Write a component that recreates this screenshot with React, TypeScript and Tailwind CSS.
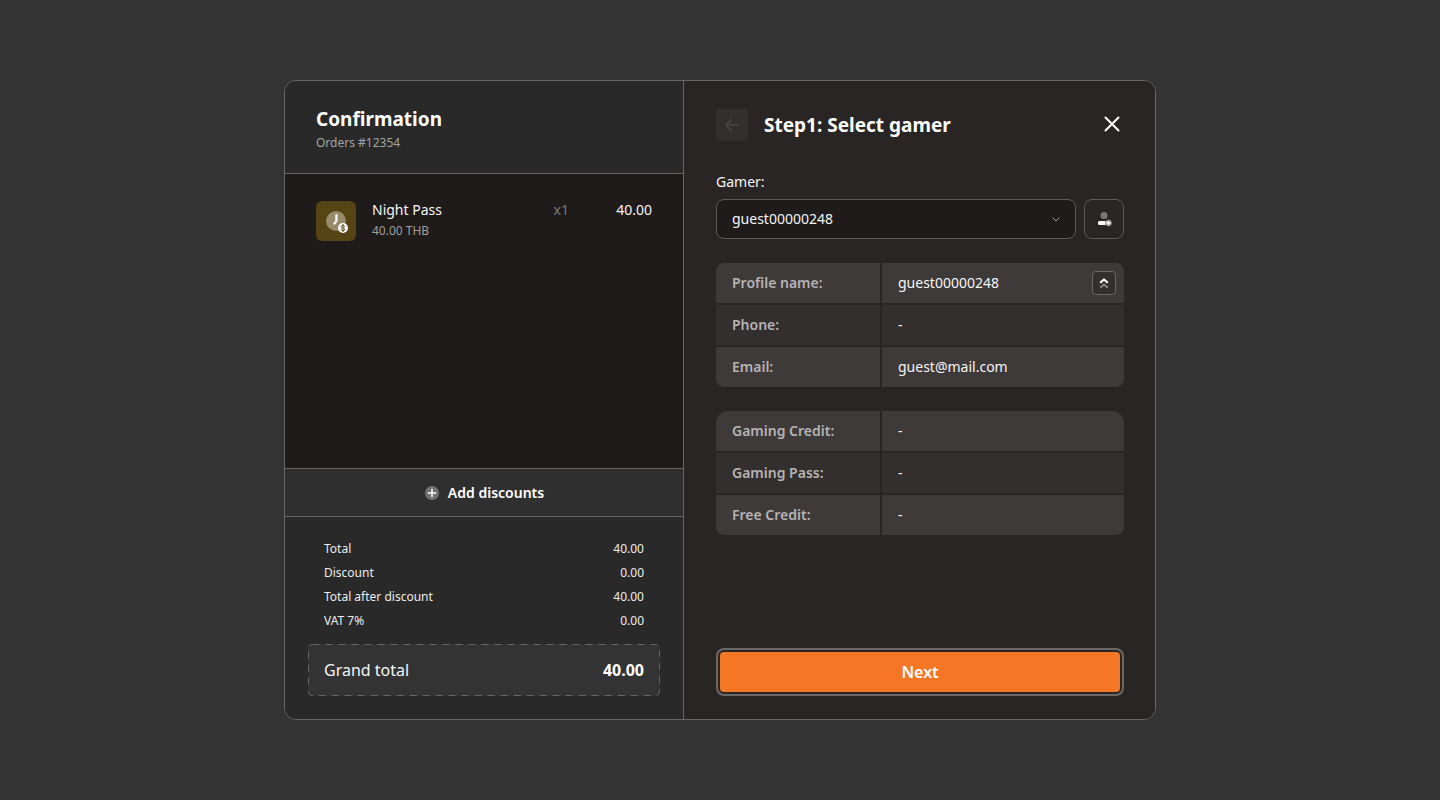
import React from "react";

interface OrderItem {
  name: string;
  price: string;
  quantity: number;
  amount: string;
}

interface Row {
  label: string;
  value: string;
}

interface InfoTableProps {
  rows: Row[];
  className?: string;
  action?: React.ReactNode;
}

const items: OrderItem[] = [
  { name: "Night Pass", price: "40.00 THB", quantity: 1, amount: "40.00" },
];

const totals: Row[] = [
  { label: "Total", value: "40.00" },
  { label: "Discount", value: "0.00" },
  { label: "Total after discount", value: "40.00" },
  { label: "VAT 7%", value: "0.00" },
];

const profile: Row[] = [
  { label: "Profile name:", value: "guest00000248" },
  { label: "Phone:", value: "-" },
  { label: "Email:", value: "guest@mail.com" },
];

const credits: Row[] = [
  { label: "Gaming Credit:", value: "-" },
  { label: "Gaming Pass:", value: "-" },
  { label: "Free Credit:", value: "-" },
];

const PassIcon = () => (
  <svg width="40" height="40" viewBox="0 0 40 40" fill="none" aria-hidden="true">
    <circle cx="20" cy="20" r="10" fill="#988b6c" />
    <path d="M20.4 14.2v5.4q0 1.2-2.2 3" stroke="#fff" strokeWidth="2.2" strokeLinecap="round" />
    <circle cx="27" cy="27" r="5" fill="#fff" />
    <path
      d="M28.8 25.4c-.3-.7-1-1-1.8-1-1 0-1.8.5-1.8 1.3 0 1.9 3.7.8 3.7 2.7 0 .8-.8 1.3-1.9 1.3-.9 0-1.6-.4-1.9-1.1M27 23.5v7"
      stroke="#574414"
      strokeLinecap="round"
    />
  </svg>
);

const AddUserIcon = () => (
  <svg width="16" height="16" viewBox="0 0 16 16" fill="none" aria-hidden="true">
    <circle cx="8" cy="4.5" r="3.5" fill="#797676" />
    <path d="M3.5 10h7v4h-7A1.5 1.5 0 0 1 2 12.500v-1A1.500 1.500 0 0 1 3.500 10Z" fill="#fff" />
    <circle cx="12.5" cy="12" r="3.300" fill="#8a8787" />
    <path d="M12.5 9.700v4.600M10.200 12h4.600" stroke="#fff" strokeWidth="1.600" />
  </svg>
);

const InfoTable = ({ rows, className = "", action }: InfoTableProps) => (
  <div className={`overflow-hidden ${className}`}>
    <table className="w-full table-fixed border-separate border-spacing-0 text-sm">
      <tbody className="[&>tr:not(:last-child)>*]:border-b-2">
        {rows.map((row, index) => (
          <tr key={row.label} className={index % 2 ? "bg-[#332f2e]" : "bg-[#3e3a39]"}>
            <th
              scope="row"
              className="w-[166px] border-r-2 border-[#292524] px-4 py-2 text-left leading-6 font-semibold text-[#b5b3b3]"
            >
              {row.label}
            </th>
            <td className="border-[#292524] py-2 pr-2 pl-4 leading-6 text-[#f5f5f5]">
              <div className="flex items-center justify-between">
                {row.value}
                {index === 0 && action}
              </div>
            </td>
          </tr>
        ))}
      </tbody>
    </table>
  </div>
);

const OrderSummary = () => (
  <section className="flex w-[399px] shrink-0 flex-col border-r border-[#666] bg-[#292929]">
    <header className="border-b border-[#666] px-[31px] pt-6 pb-5">
      <h1 className="text-[19px] leading-7 font-bold">Confirmation</h1>
      <p className="text-xs leading-5 text-[#a3a3a3]">Orders #12354</p>
    </header>

    <ul className="flex-1 bg-[#1f1b1a] px-[31px] py-[27px]">
      {items.map((item) => (
        <li key={item.name} className="flex">
          <div className="h-10 w-10 shrink-0 rounded-md bg-[#574414]">
            <PassIcon />
          </div>
          <div className="ml-4 flex-1">
            <p className="text-sm leading-[18px] text-[#f5f5f5]">{item.name}</p>
            <p className="text-xs leading-6 text-[#a09e9e]">{item.price}</p>
          </div>
          <span className="text-sm leading-[18px] text-[#7a7777]">x{item.quantity}</span>
          <span className="w-[83px] text-right text-sm leading-[18px] text-[#f5f5f5]">{item.amount}</span>
        </li>
      ))}
    </ul>

    <button
      type="button"
      className="flex h-[49px] items-center justify-center gap-2 border-y border-[#666] bg-[#2f2f2f] text-sm font-semibold"
    >
      <svg width="16" height="16" viewBox="0 0 16 16" fill="none" aria-hidden="true">
        <circle cx="8" cy="8" r="7" fill="#737373" />
        <path d="M8 4.5v7M4.5 8h7" stroke="#fff" strokeWidth="1.5" strokeLinecap="round" />
      </svg>
      Add discounts
    </button>

    <div className="px-[23px] pt-5 pb-[23px]">
      <dl className="px-4 text-xs leading-6 text-[#ececec]">
        {totals.map((row) => (
          <div key={row.label} className="flex justify-between">
            <dt>{row.label}</dt>
            <dd>{row.value}</dd>
          </div>
        ))}
      </dl>
      <div className="relative mt-[11px] flex h-13 items-center justify-between rounded bg-[#333] px-4 text-base">
        <svg className="pointer-events-none absolute inset-0 h-full w-full overflow-visible" aria-hidden="true">
          <rect
            x="0.5"
            y="0.5"
            rx="4"
            className="h-[calc(100%-1px)] w-[calc(100%-1px)]"
            fill="none"
            stroke="#666"
            strokeDasharray="7 6"
          />
        </svg>
        <span className="text-[#f5f5f5]">Grand total</span>
        <strong className="font-bold">40.00</strong>
      </div>
    </div>
  </section>
);

const SelectGamer = () => (
  <section className="flex min-w-0 flex-1 flex-col bg-[#292524] pt-7 pr-[31px] pb-[23px] pl-8">
    <header className="flex items-center">
      <button
        type="button"
        disabled
        aria-label="Back"
        className="flex h-8 w-8 items-center justify-center rounded bg-[#332f2e]"
      >
        <svg width="16" height="16" viewBox="0 0 16 16" fill="none" stroke="#4a4645" strokeWidth="1.5" aria-hidden="true">
          <path d="M14 8H2M7.5 2.5 2 8l5.5 5.5" strokeLinecap="round" strokeLinejoin="round" />
        </svg>
      </button>
      <h2 className="ml-4 flex-1 text-[19px] leading-8 font-bold">Step1: Select gamer</h2>
      <button type="button" aria-label="Close" className="flex h-8 w-6 items-center justify-center pb-0.5">
        <svg width="16" height="16" viewBox="0 0 16 16" stroke="#fff" strokeWidth="2" aria-hidden="true">
          <path d="m1.500 1.500 13 13M14.500 1.500l-13 13" strokeLinecap="round" />
        </svg>
      </button>
    </header>

    <label htmlFor="gamer" className="mt-8 text-sm leading-[18px] text-[#f5f5f5]">
      Gamer:
    </label>
    <div className="mt-2 flex gap-2">
      <div className="relative flex-1">
        <select
          id="gamer"
          className="h-10 w-full appearance-none rounded-lg border border-[#5c5958] bg-[#1f1b1a] px-[15px] text-sm text-[#f5f5f5]"
        >
          <option>guest00000248</option>
        </select>
        <svg
          className="pointer-events-none absolute top-4 right-4"
          width="8"
          height="8"
          viewBox="0 0 8 8"
          fill="none"
          stroke="#a3a1a1"
          aria-hidden="true"
        >
          <path d="m1 3 3 3 3-3" strokeLinecap="round" strokeLinejoin="round" />
        </svg>
      </div>
      <button
        type="button"
        aria-label="Add gamer"
        className="flex h-10 w-10 items-center justify-center rounded-lg border border-[#5c5958]"
      >
        <AddUserIcon />
      </button>
    </div>

    <InfoTable
      rows={profile}
      className="mt-6 rounded-lg"
      action={
        <button
          type="button"
          aria-label="Collapse profile"
          className="flex h-6 w-6 items-center justify-center rounded border border-[#6b6868] bg-[#332f2e]"
        >
          <svg width="12" height="12" viewBox="0 0 12 12" fill="none" strokeWidth="2" strokeLinejoin="round" aria-hidden="true">
            <path d="M2.200 10.800 6 7.400l3.800 3.400" stroke="#858282" />
            <path d="M2.200 5.800 6 2.400l3.800 3.400" stroke="#fff" />
          </svg>
        </button>
      }
    />
    <InfoTable rows={credits} className="mt-6 rounded-t-xl rounded-b-lg" />

    <div className="mt-auto rounded-lg border-2 border-[#6b6868] p-0.5">
      <button type="button" className="h-10 w-full rounded bg-[#f57624] text-base font-semibold text-white">
        Next
      </button>
    </div>
  </section>
);

const App = () => (
  <main className="flex min-h-screen justify-center bg-[#333] p-20 font-['Noto_Sans',sans-serif] text-white">
    <div className="flex w-full max-w-[872px] overflow-hidden rounded-xl border border-[#666]">
      <OrderSummary />
      <SelectGamer />
    </div>
  </main>
);

export default App;
